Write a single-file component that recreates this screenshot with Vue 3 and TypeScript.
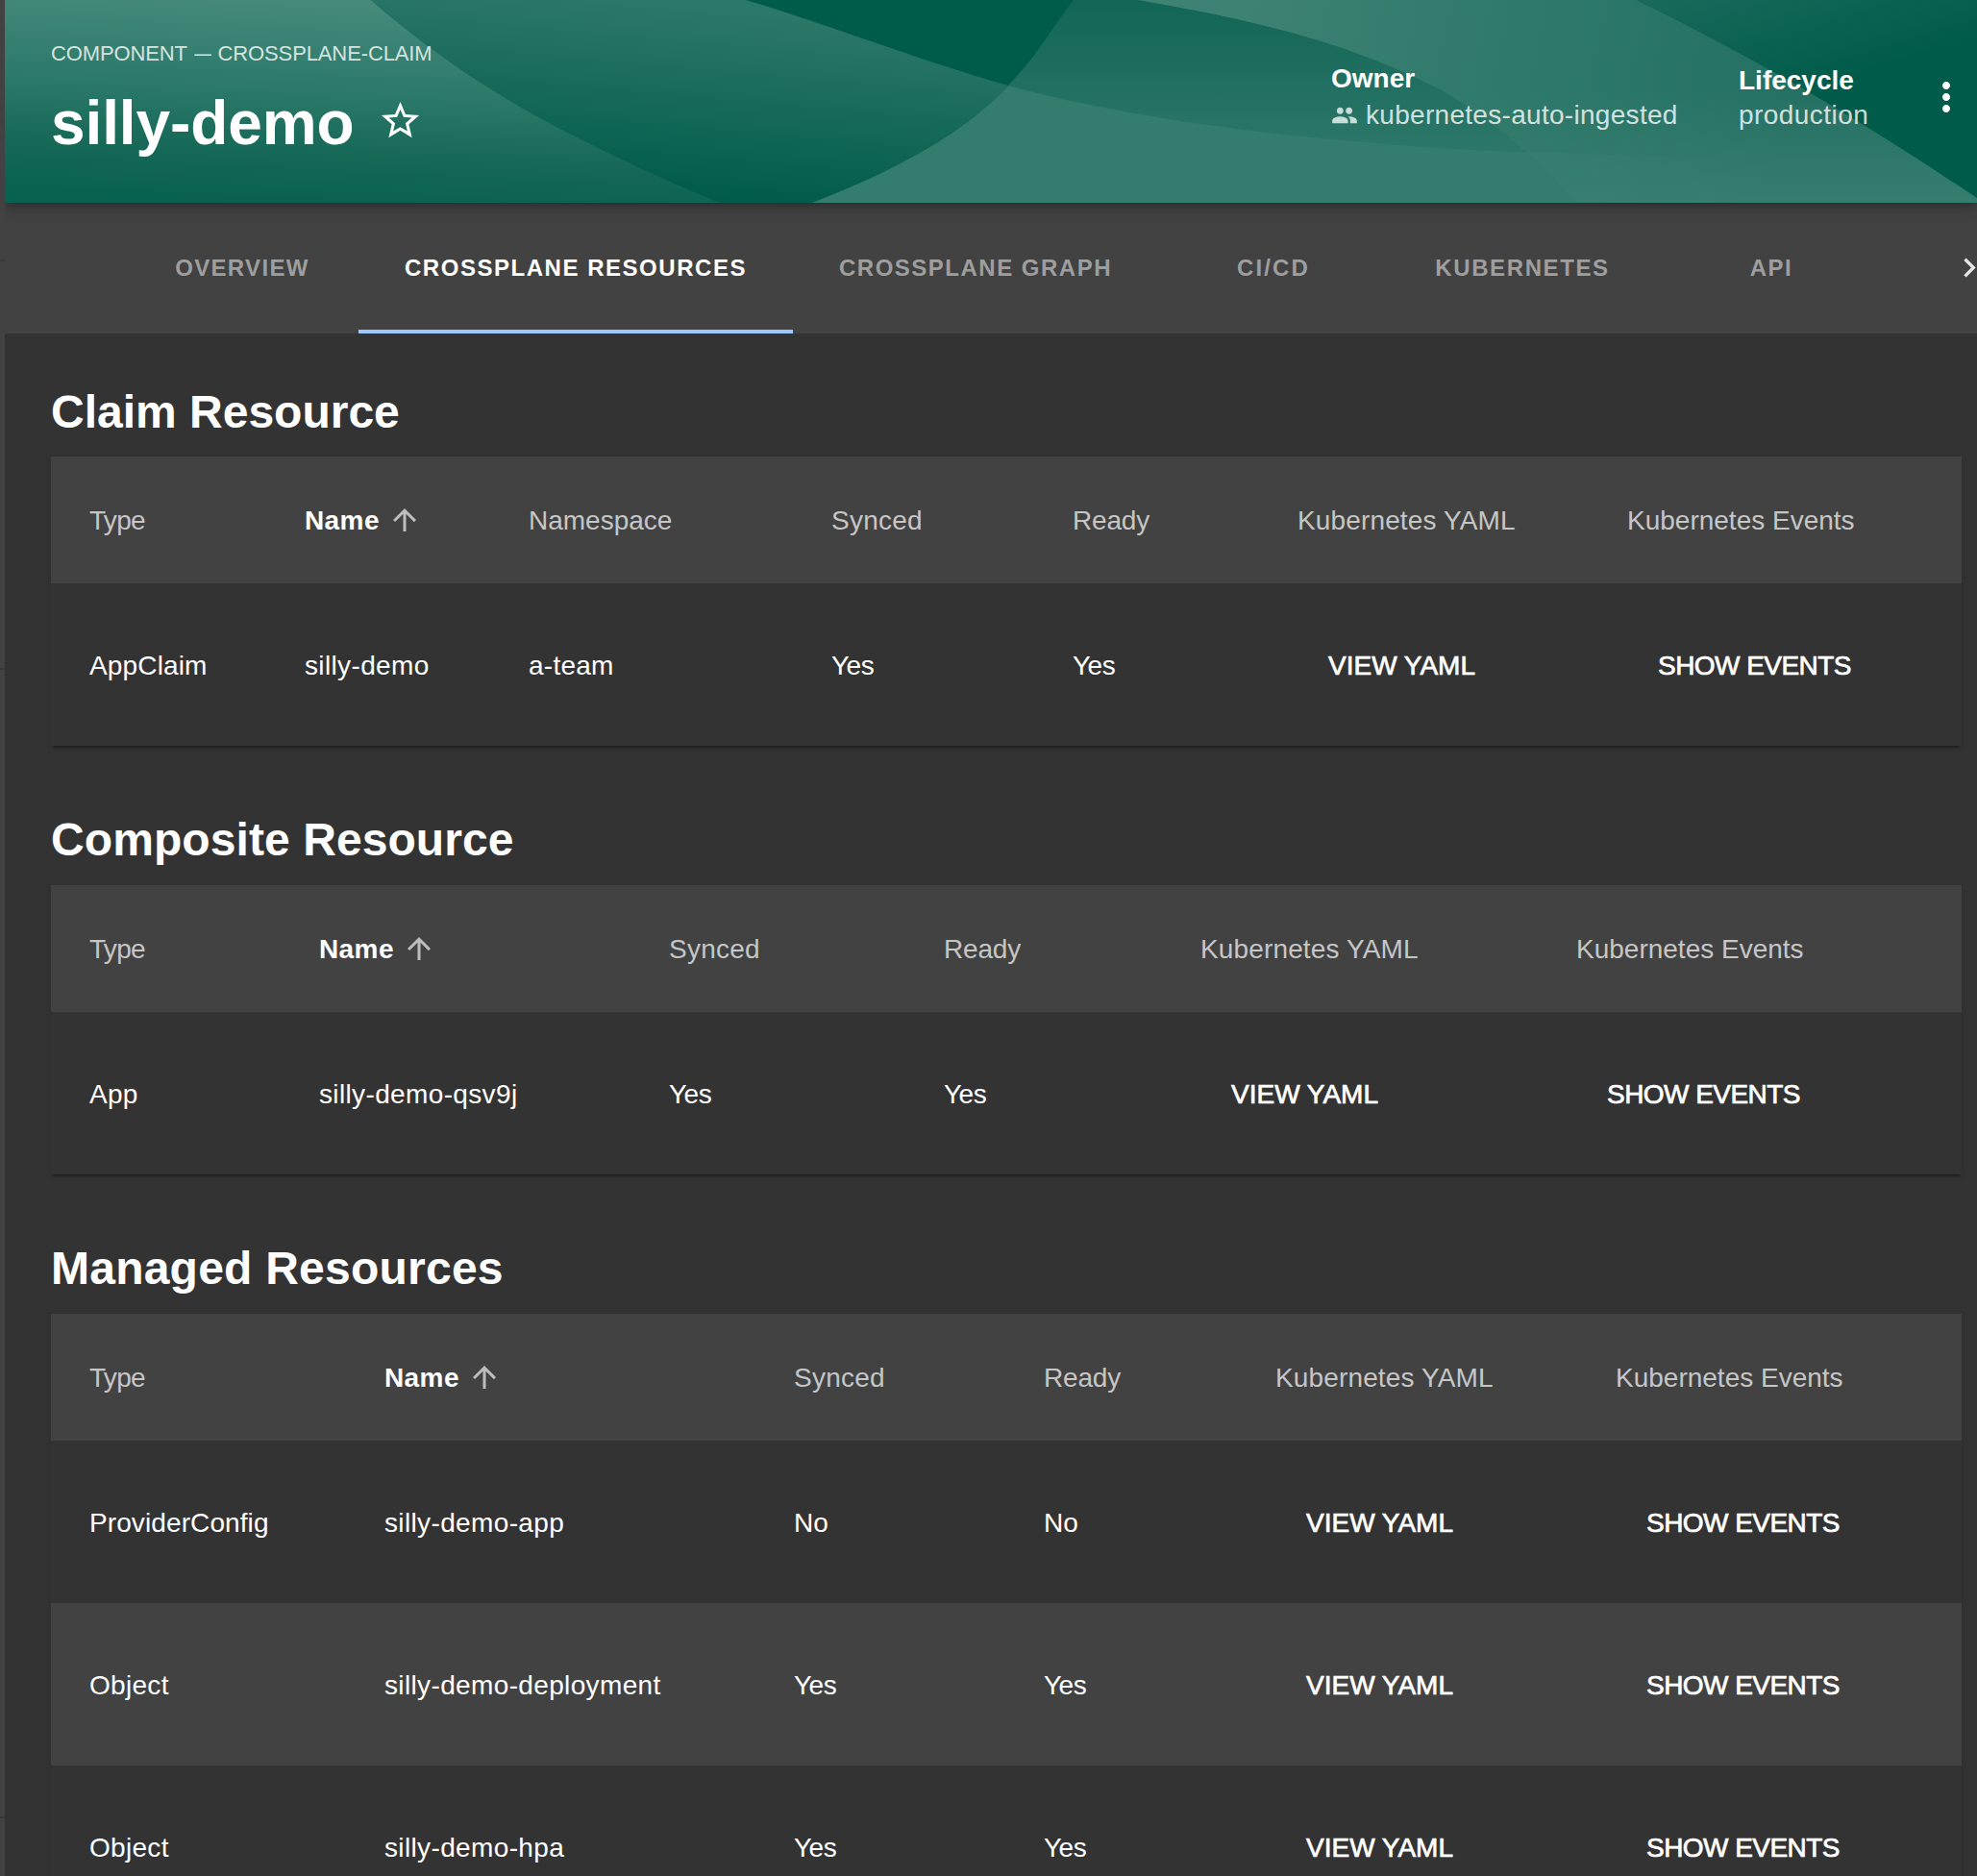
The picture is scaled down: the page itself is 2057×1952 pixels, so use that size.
<script setup lang="ts">
interface Tab {
  label: string
  width: number
  spacing: number
  active?: boolean
}

interface Section {
  title: string
  spacing: number
  widths: number[]
  columns: string[]
  rows: string[][]
}

const tabs: Tab[] = [
  { label: 'Overview', width: 242, spacing: 1.35 },
  { label: 'Crossplane Resources', width: 452, spacing: 1.53, active: true },
  { label: 'Crossplane Graph', width: 380, spacing: 1.5 },
  { label: 'CI/CD', width: 240, spacing: 2.1 },
  { label: 'Kubernetes', width: 278, spacing: 1.6 },
  { label: 'API', width: 240, spacing: 1.5 },
]

const actions = ['Kubernetes YAML', 'Kubernetes Events']

const sections: Section[] = [
  {
    title: 'Claim Resource',
    spacing: 0,
    widths: [224, 233, 315, 251, 234, 343, 388],
    columns: ['Type', 'Name', 'Namespace', 'Synced', 'Ready', ...actions],
    rows: [['AppClaim', 'silly-demo', 'a-team', 'Yes', 'Yes']],
  },
  {
    title: 'Composite Resource',
    spacing: 0.08,
    widths: [239, 364, 286, 267, 391, 441],
    columns: ['Type', 'Name', 'Synced', 'Ready', ...actions],
    rows: [['App', 'silly-demo-qsv9j', 'Yes', 'Yes']],
  },
  {
    title: 'Managed Resources',
    spacing: 0.23,
    widths: [307, 426, 260, 241, 354, 400],
    columns: ['Type', 'Name', 'Synced', 'Ready', ...actions],
    rows: [
      ['ProviderConfig', 'silly-demo-app', 'No', 'No'],
      ['Object', 'silly-demo-deployment', 'Yes', 'Yes'],
      ['Object', 'silly-demo-hpa', 'Yes', 'Yes'],
    ],
  },
]

const spacing: Record<string, number> = {
  Type: -0.7,
  Name: 0.4,
  Synced: 0.25,
  Ready: -0.2,
  Yes: -0.5,
  'Kubernetes YAML': 0.14,
  Object: 0.3,
  AppClaim: 0.15,
  ProviderConfig: 0.1,
  App: 0.3,
  'a-team': 0.25,
}

function tracking(text: string) {
  const value = spacing[text] ?? (text.startsWith('silly') ? 0.36 : 0)
  return { letterSpacing: value + 'px' }
}
</script>

<template>
  <div class="page">
    <aside class="rail">
      <i class="rule first"></i>
      <i class="rule second"></i>
      <i class="rule third"></i>
    </aside>
    <main class="main">
      <header class="hero">
        <svg class="waves" viewBox="5 0 2052 211" preserveAspectRatio="none" aria-hidden="true">
          <defs>
            <linearGradient id="ga" gradientUnits="userSpaceOnUse" x1="300" y1="0" x2="290" y2="211">
              <stop offset="0" stop-color="#468a7b" />
              <stop offset="0.45" stop-color="#2b7969" />
              <stop offset="0.75" stop-color="#166857" />
              <stop offset="1" stop-color="#09614f" />
            </linearGradient>
            <linearGradient id="gb" gradientUnits="userSpaceOnUse" x1="640" y1="0" x2="622" y2="200">
              <stop offset="0" stop-color="#2c7869" />
              <stop offset="1" stop-color="#005b4a" />
            </linearGradient>
            <linearGradient id="gc" gradientUnits="userSpaceOnUse" x1="0" y1="0" x2="0" y2="165">
              <stop offset="0" stop-color="#126656" />
              <stop offset="1" stop-color="#2e786a" />
            </linearGradient>
            <linearGradient id="gd" gradientUnits="userSpaceOnUse" x1="1300" y1="0" x2="1860" y2="130">
              <stop offset="0" stop-color="#3e8273" />
              <stop offset="0.5" stop-color="#2e796a" />
              <stop offset="1" stop-color="#247063" />
            </linearGradient>
            <linearGradient id="gf" gradientUnits="userSpaceOnUse" x1="0" y1="90" x2="0" y2="211">
              <stop offset="0" stop-color="#357d6f" stop-opacity="0" />
              <stop offset="1" stop-color="#357d6f" />
            </linearGradient>
            <linearGradient id="gl" gradientUnits="userSpaceOnUse" x1="1589" y1="0" x2="1860" y2="0">
              <stop offset="0" stop-color="#ffffff" stop-opacity="0.02" />
              <stop offset="1" stop-color="#ffffff" stop-opacity="0" />
            </linearGradient>
            <linearGradient id="ge" gradientUnits="userSpaceOnUse" x1="1710" y1="0" x2="1753" y2="138">
              <stop offset="0" stop-color="#196a5b" />
              <stop offset="1" stop-color="#005b4a" />
            </linearGradient>
          </defs>
          <path fill="#005c4a" d="M5 0H2057V211H5z" />
          <path fill="url(#gb)" d="M386 0H776C870 28 950 61 1049 89C1003 140 950 168 845 211H749C600 160 500 100 386 0z" />
          <path fill="url(#ga)" d="M5 0H386C452 58 510 94 560 122C625 157 690 187 749 211H5z" />
          <path fill="url(#gc)" d="M1117 0H1700V180C1440 168 1210 150 1049 89C1084 52 1092 32 1117 0z" />
          <path fill="#347c6e" d="M845 211C930 178 1005 138 1049 89C1190 128 1400 152 1600 159L1700 163V211z" />
          <path fill="url(#gd)" d="M1184 0H1703C1845 70 1935 125 2065 211H1640C1595 160 1550 123 1500 94C1400 42 1300 20 1184 0z" />
          <path fill="url(#gf)" d="M1703 0C1845 70 1935 125 2065 211H1640C1595 160 1550 123 1500 94C1400 42 1300 20 1184 0z" />
          <path fill="url(#gl)" d="M1589 158L1860 167V211H1640C1624 193 1608 176 1589 158z" />
          <path fill="url(#ge)" d="M1703 0H2057V206C1935 124 1845 71 1703 0z" />
        </svg>
        <div class="identity">
          <div class="kind">COMPONENT <span class="dash">—</span> CROSSPLANE-CLAIM</div>
          <div class="title-row">
            <h1 class="title">silly-demo</h1>
            <svg class="star" viewBox="0 0 24 24" aria-hidden="true">
              <path fill="currentColor" d="M22 9.24l-7.19-.62L12 2 9.19 8.63 2 9.24l5.46 4.73L5.82 21 12 17.27 18.18 21l-1.63-7.03L22 9.24zM12 15.4l-3.76 2.27 1-4.28-3.32-2.88 4.38-.38L12 6.1l1.71 4.04 4.38.38-3.32 2.88 1 4.28L12 15.4z" />
            </svg>
          </div>
        </div>
        <div class="fact owner">
          <div class="fact-label">Owner</div>
          <div class="fact-value">
            <svg class="people" viewBox="0 0 24 24" aria-hidden="true">
              <path fill="currentColor" d="M16 11c1.66 0 2.99-1.34 2.99-3S17.66 5 16 5c-1.66 0-3 1.34-3 3s1.34 3 3 3zm-8 0c1.66 0 2.99-1.34 2.99-3S9.66 5 8 5C6.34 5 5 6.34 5 8s1.34 3 3 3zm0 2c-2.33 0-7 1.17-7 3.5V19h14v-2.5c0-2.33-4.67-3.5-7-3.5zm8 0c-.29 0-.62.02-.97.05 1.16.84 1.97 1.97 1.97 3.45V19h6v-2.5c0-2.33-4.67-3.5-7-3.5z" />
            </svg>
            <span>kubernetes-auto-ingested</span>
          </div>
        </div>
        <div class="fact lifecycle">
          <div class="fact-label">Lifecycle</div>
          <div class="fact-value">production</div>
        </div>
        <svg class="more" viewBox="0 0 24 24" aria-hidden="true">
          <path fill="currentColor" d="M12 8c1.1 0 2-.9 2-2s-.9-2-2-2-2 .9-2 2 .9 2 2 2zm0 2c-1.1 0-2 .9-2 2s.9 2 2 2 2-.9 2-2-.9-2-2-2zm0 6c-1.1 0-2 .9-2 2s.9 2 2 2 2-.9 2-2-.9-2-2-2z" />
        </svg>
      </header>

      <nav class="tabs">
        <div
          v-for="tab in tabs"
          :key="tab.label"
          class="tab"
          :class="{ active: tab.active }"
          :style="{ width: tab.width + 'px', letterSpacing: tab.spacing + 'px' }"
        >
          <span>{{ tab.label }}</span>
        </div>
        <svg class="next" viewBox="0 0 24 24" aria-hidden="true">
          <path fill="currentColor" d="M8.59 16.34l4.58-4.59-4.58-4.59L10 5.75l6 6-6 6z" />
        </svg>
      </nav>

      <section v-for="section in sections" :key="section.title" class="section">
        <h2 class="heading" :style="{ letterSpacing: section.spacing + 'px' }">{{ section.title }}</h2>
        <table class="card">
          <colgroup>
            <col v-for="(w, i) in section.widths" :key="i" :style="{ width: w + 'px' }" />
          </colgroup>
          <thead>
            <tr>
              <th v-for="column in section.columns" :key="column" :class="{ sorted: column === 'Name' }">
                <span class="cell-label" :style="tracking(column)">
                  {{ column }}
                  <svg v-if="column === 'Name'" class="arrow" viewBox="0 0 24 24" aria-hidden="true">
                    <path fill="currentColor" d="M4 12l1.41 1.41L11 7.83V20h2V7.83l5.58 5.59L20 12l-8-8-8 8z" />
                  </svg>
                </span>
              </th>
            </tr>
          </thead>
          <tbody>
            <tr v-for="row in section.rows" :key="row[1]">
              <td v-for="(value, i) in row" :key="i" :style="tracking(value)">{{ value }}</td>
              <td><button class="action" type="button">View YAML</button></td>
              <td><button class="action events" type="button">Show Events</button></td>
            </tr>
          </tbody>
        </table>
      </section>
    </main>
  </div>
</template>

<style>
body {
  background: #333333;
}
</style>

<style scoped>
.page {
  display: flex;
  width: 2057px;
  height: 1952px;
  overflow: hidden;
  background: #333333;
  color: #ffffff;
  font-family: "Liberation Sans", Arial, sans-serif;
  font-size: 28px;
}

.rail {
  display: flex;
  flex: none;
  flex-direction: column;
  width: 5px;
  background: #424242;
}

.rule {
  flex: none;
  height: 2px;
  background: #383838;
}

.rule.first {
  margin-top: 270px;
}

.rule.second {
  margin-top: 423px;
}

.rule.third {
  margin-top: 1193px;
}

.main {
  flex: none;
  width: 2052px;
  overflow: hidden;
}

.hero {
  position: relative;
  z-index: 1;
  display: flex;
  height: 211px;
  box-sizing: border-box;
  padding-left: 48px;
  box-shadow: 0 4px 8px -2px rgba(0, 0, 0, 0.24), 0 6px 16px rgba(0, 0, 0, 0.16);
}

.waves {
  position: absolute;
  inset: 0;
  z-index: -1;
  width: 100%;
  height: 100%;
}

.identity {
  width: 1332px;
  padding-top: 43px;
}

.kind {
  color: rgba(255, 255, 255, 0.8);
  font-size: 22px;
  line-height: 26px;
  letter-spacing: -0.12px;
  white-space: nowrap;
}

.dash {
  display: inline-block;
  width: 20px;
  transform: scaleX(0.8);
  transform-origin: 50% 50%;
  text-indent: -1px;
}

.title-row {
  display: flex;
  margin-top: 23px;
}

.title {
  width: 340px;
  margin: 0;
  font-size: 64px;
  line-height: 72px;
  letter-spacing: -0.1px;
}

.star {
  width: 47px;
  height: 47px;
  margin-top: 10px;
}

.fact-label {
  font-weight: 700;
  line-height: 38px;
}

.fact-value {
  display: flex;
  align-items: center;
  line-height: 38px;
  letter-spacing: 0.3px;
  color: rgba(255, 255, 255, 0.8);
}

.owner {
  width: 424px;
  padding-top: 63px;
}

.lifecycle {
  width: 192px;
  padding-top: 65px;
}

.lifecycle .fact-value {
  margin-top: -2px;
  letter-spacing: 0.45px;
}

.people {
  width: 28px;
  height: 28px;
  margin-right: 8px;
  color: rgba(255, 255, 255, 0.75);
}

.more {
  width: 48px;
  height: 48px;
  margin-top: 77px;
}

.tabs {
  display: flex;
  height: 136px;
  padding-left: 126px;
  background: #424242;
}

.tab {
  display: flex;
  flex: none;
  align-items: center;
  justify-content: center;
  box-sizing: border-box;
  border-bottom: 4px solid transparent;
  padding-top: 4px;
  color: #9e9e9e;
  font-size: 24px;
  font-weight: 700;
  text-transform: uppercase;
  white-space: nowrap;
}

.tab.active {
  border-bottom-color: #9cc9ff;
  color: #ffffff;
}

.next {
  flex: none;
  width: 40px;
  height: 40px;
  margin: 48px 0 0 66px;
  color: #e6e6e6;
}

.section {
  padding-left: 48px;
  margin-bottom: 70px;
}

.tabs + .section {
  padding-top: 54px;
}

.heading {
  margin: 0 0 19px;
  font-size: 48px;
  line-height: 56px;
}

.tabs + .section .heading {
  margin-bottom: 18px;
}

.card {
  width: 1988px;
  border-collapse: collapse;
  table-layout: fixed;
  background: #333333;
  box-shadow: 0 4px 2px -2px rgba(0, 0, 0, 0.3), 0 2px 6px rgba(0, 0, 0, 0.13);
}

.card tr {
  height: 169px;
}

.card thead tr {
  height: 132px;
  background: #424242;
}

.card tbody tr:nth-child(even) {
  background: #424242;
}

.card th,
.card td {
  padding: 2px 0 0 40px;
  text-align: left;
  vertical-align: middle;
  white-space: nowrap;
}

.card th {
  color: #c6c6c6;
  font-weight: 400;
}

.card th.sorted {
  color: #ffffff;
  font-weight: 700;
}

.cell-label {
  display: flex;
  align-items: center;
}

.arrow {
  width: 36px;
  height: 36px;
  margin: -2px 0 0 8px;
  color: #bdbdbd;
}

.action {
  margin: 0;
  border: 0;
  padding: 0 0 0 32px;
  background: none;
  color: #ffffff;
  font: inherit;
  text-transform: uppercase;
  -webkit-text-stroke: 0.7px #ffffff;
}

.action.events {
  letter-spacing: -0.54px;
}
</style>
